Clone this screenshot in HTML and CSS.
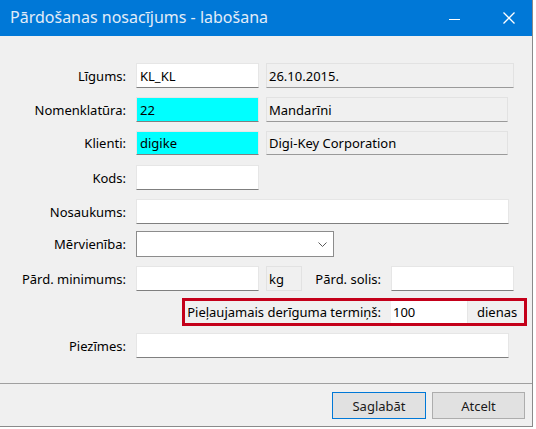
FILE: index.html
```html
<!DOCTYPE html>
<html lang="lv">
<head>
<meta charset="utf-8">
<title>Pārdošanas nosacījums - labošana</title>
<link rel="stylesheet" href="styles.css">
</head>
<body>
<div class="window">
  <div class="titlebar">
    <span class="title">Pārdošanas nosacījums - labošana</span>
    <div class="controls">
      <svg class="ctl-min" width="11" height="11" viewBox="0 0 11 11"><line x1="0" y1="6.5" x2="11" y2="6.5" stroke="#ffffff" stroke-width="1"/></svg>
      <svg class="ctl-close" width="12" height="12" viewBox="0 0 12 12"><path d="M0.5 0.5 L11.5 11.5 M11.5 0.5 L0.5 11.5" stroke="#ffffff" stroke-width="1.3" fill="none"/></svg>
    </div>
  </div>
  <div class="content">
    <div class="form">
      <div class="row">
        <span class="lbl">Līgums:</span>
        <div class="field edit w-short">KL_KL</div>
        <div class="field ro w-wide">26.10.2015.</div>
      </div>
      <div class="row">
        <span class="lbl">Nomenklatūra:</span>
        <div class="field edit cyan w-short">22</div>
        <div class="field ro w-mid">Mandarīni</div>
      </div>
      <div class="row h24">
        <span class="lbl">Klienti:</span>
        <div class="field edit cyan w-short">digike</div>
        <div class="field ro w-mid">Digi-Key Corporation</div>
      </div>
      <div class="row mt10">
        <span class="lbl">Kods:</span>
        <div class="field edit w-short"></div>
      </div>
      <div class="row">
        <span class="lbl">Nosaukums:</span>
        <div class="field edit w-full"></div>
      </div>
      <div class="row mt7 h26">
        <span class="lbl">Mērvienība:</span>
        <div class="field combo">
          <svg class="chev" width="9" height="5" viewBox="0 0 9 5"><polyline points="0.5,0.5 4.5,4.5 8.5,0.5" fill="none" stroke="#5a5a5a" stroke-width="1"/></svg>
        </div>
      </div>
      <div class="row">
        <span class="lbl">Pārd. minimums:</span>
        <div class="field edit w-short"></div>
        <div class="field unit">kg</div>
        <span class="lbl-inline">Pārd. solis:</span>
        <div class="field edit w-short"></div>
      </div>
      <div class="row mt7 h28">
        <div class="highlight">
          <span class="hl-lbl">Pieļaujamais derīguma termiņš:</span>
          <div class="field hl-input">100</div>
          <div class="field hl-unit">dienas</div>
        </div>
      </div>
      <div class="row mt7">
        <span class="lbl">Piezīmes:</span>
        <div class="field edit w-full"></div>
      </div>
    </div>
    <div class="sep"></div>
    <div class="buttons">
      <button class="btn btn-default">Saglabāt</button>
      <button class="btn">Atcelt</button>
    </div>
  </div>
</div>
</body>
</html>
```

FILE: styles.css
```css
* { box-sizing: border-box; }

html, body {
  margin: 0;
  padding: 0;
  background: #ffffff;
}

body {
  font-family: "Noto Sans", "Open Sans", sans-serif;
  font-size: 13px;
  color: #000000;
}

.window {
  width: 533px;
  height: 427px;
  background: #f0f0f0;
  border-right: 1px solid #8a8a8a;
  border-bottom: 1px solid #8a8a8a;
  display: flex;
  flex-direction: column;
}

.titlebar {
  height: 36px;
  flex: none;
  background: #0078d7;
  display: flex;
  align-items: center;
  justify-content: space-between;
  padding-left: 10px;
}

.title {
  color: #e2ecf7;
  font-size: 16px;
  line-height: 36px;
  margin-top: -2px;
}

.controls {
  display: flex;
  align-items: center;
  height: 36px;
  padding-right: 17px;
}

.ctl-min {
  display: block;
  margin-right: 43px;
  margin-top: 1px;
}

.ctl-close {
  display: block;
  margin-top: -1px;
}

.content {
  flex: 1;
  display: flex;
  flex-direction: column;
}

.form {
  padding-top: 27px;
  display: flex;
  flex-direction: column;
}

.row {
  display: flex;
  align-items: stretch;
  height: 25px;
}

.row + .row { margin-top: 9px; }
.row.mt10 { margin-top: 10px; }
.row.mt7 { margin-top: 7px; }
.row.h24 { height: 24px; }
.row.h26 { height: 26px; }
.row.h28 { height: 28px; }

.lbl {
  width: 126px;
  margin-right: 10px;
  text-align: right;
  display: flex;
  align-items: center;
  justify-content: flex-end;
  white-space: nowrap;
}

.field {
  display: flex;
  align-items: center;
  padding-left: 3px;
  white-space: nowrap;
  overflow: hidden;
}

.edit {
  background: #ffffff;
  border: 1px solid #e6e6e6;
  border-bottom-color: #7f7f7f;
}

.cyan {
  background: #00ffff;
}

.ro {
  background: #f0f0f0;
  border: 1px solid #e2e2e2;
  border-bottom-color: #9a9a9a;
  margin-left: 7px;
  padding-left: 2px;
}

.w-short { width: 123px; }
.w-wide { width: 248px; }
.w-mid { width: 242px; }
.w-full { width: 373px; }

.combo {
  width: 198px;
  background: #ffffff;
  border: 1px solid #8c8c8c;
  justify-content: flex-end;
  padding-right: 6px;
}

.chev { display: block; }

.unit {
  width: 36px;
  margin-left: 7px;
  background: #f0f0f0;
  border: 1px solid #e2e2e2;
  padding-left: 2px;
}

.lbl-inline {
  width: 79px;
  margin-right: 10px;
  display: flex;
  align-items: center;
  justify-content: flex-end;
  white-space: nowrap;
}

.highlight {
  margin-left: 182px;
  width: 345px;
  border: 3px solid #c4001a;
  display: flex;
  align-items: stretch;
}

.hl-lbl {
  width: 196px;
  margin-right: 10px;
  display: flex;
  align-items: center;
  justify-content: flex-end;
  white-space: nowrap;
}

.hl-input {
  width: 76px;
  background: #ffffff;
  padding-left: 2px;
}

.hl-unit {
  width: 57px;
  background: #f0f0f0;
  border-left: 1px solid #e6e6e6;
  padding-left: 9px;
}

.sep {
  margin-top: 25px;
  height: 1px;
  background: #a0a0a0;
}

.buttons {
  margin-top: 8px;
  display: flex;
  justify-content: flex-end;
  gap: 6px;
  padding-right: 7px;
}

.btn {
  font-family: inherit;
  font-size: 13px;
  color: #1a1a1a;
  height: 27px;
  width: 93px;
  background: #e1e1e1;
  border: 1px solid #adadad;
  padding: 0;
  margin: 0;
}

.btn-default {
  border-color: #0078d7;
  width: 94px;
}
```
